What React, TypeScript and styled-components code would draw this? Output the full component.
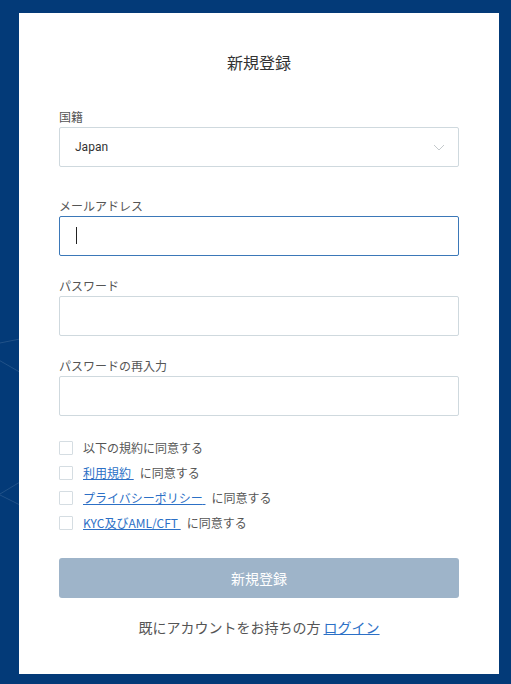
import React from 'react';
import styled, { createGlobalStyle } from 'styled-components';

const GlobalStyle = createGlobalStyle`
    html, body {
        margin: 0;
        padding: 0;
        background: #033a78;
    }

    body {
        font-family: "Noto Sans CJK JP", "Noto Sans", sans-serif;
    }
`;

const Page = styled.div`
    position: relative;
    min-height: 684px;
    padding: 13px 12px 10px 19px;
    box-sizing: border-box;
    overflow: hidden;
`;

const Backdrop = styled.svg`
    position: absolute;
    inset: 0;
    width: 100%;
    height: 100%;
    pointer-events: none;
`;

const Card = styled.main`
    position: relative;
    background: #fff;
    min-height: 661px;
    padding: 37px 40px 30px;
    box-sizing: border-box;
`;

const Title = styled.h1`
    margin: 0 0 34px;
    font-size: 16px;
    line-height: 24px;
    font-weight: 400;
    color: #333;
    text-align: center;
`;

const Field = styled.div<{ $spacing?: number }>`
    display: flex;
    flex-direction: column;
    margin-bottom: ${(p) => p.$spacing ?? 21}px;
`;

const Label = styled.label`
    font-size: 12px;
    line-height: 18px;
    color: #555;
    margin-bottom: 1px;
`;

const InputBox = styled.div<{ $focused?: boolean }>`
    position: relative;
    height: 40px;
    box-sizing: border-box;
    border: 1px solid ${(p) => (p.$focused ? '#3b78b8' : '#cfd9de')};
    border-radius: 2px;
    background: #fff;
    display: flex;
    align-items: center;
`;

const TextInput = styled.input`
    flex: 1;
    height: 100%;
    border: none;
    outline: none;
    background: transparent;
    padding: 0 16px;
    font-size: 12px;
    color: #333;
    caret-color: transparent;
    font-family: "Roboto", "Noto Sans CJK JP", sans-serif;
`;

const Caret = styled.span`
    position: absolute;
    left: 16px;
    top: 10px;
    width: 1px;
    height: 17px;
    background: #222;
`;

const SelectValue = styled.span`
    flex: 1;
    padding: 0 15px;
    font-family: "Roboto", "Liberation Sans", sans-serif;
    font-size: 12px;
    color: #333;
`;

const Chevron = styled.svg`
    margin-right: 13px;
`;

const Checks = styled.ul`
    list-style: none;
    margin: 0 0 23px;
    padding: 0;
`;

const CheckRow = styled.li`
    display: flex;
    align-items: center;
    height: 25px;
    font-size: 12px;
    color: #555;
`;

const Box = styled.span`
    width: 14px;
    height: 14px;
    box-sizing: border-box;
    border: 1px solid #d5dde2;
    border-radius: 1px;
    margin-right: 10px;
`;

const Link = styled.a`
    color: #2c70c6;
    text-decoration: underline;
    cursor: pointer;
`;

const Suffix = styled.span`
    margin-left: 6px;
`;

const SubmitButton = styled.button`
    width: 100%;
    height: 40px;
    border: none;
    border-radius: 3px;
    background: #9eb4c9;
    color: #fff;
    font-family: inherit;
    font-size: 14px;
    cursor: default;
`;

const Footer = styled.p`
    margin: 19px 0 0;
    text-align: center;
    font-size: 14px;
    line-height: 20px;
    color: #555;
`;

const agreements: { link?: string; text: string }[] = [
    { text: '以下の規約に同意する' },
    { link: '利用規約', text: 'に同意する' },
    { link: 'プライバシーポリシー', text: 'に同意する' },
    { link: 'KYC及びAML/CFT', text: 'に同意する' },
];

export default function App() {
    return (
        <Page>
            <GlobalStyle />
            <Backdrop viewBox="0 0 511 684" preserveAspectRatio="none">
                <g stroke="#ffffff" strokeOpacity="0.12" strokeWidth="1" fill="none">
                    <line x1="-10" y1="345" x2="40" y2="335" />
                    <line x1="-10" y1="355" x2="30" y2="378" />
                    <line x1="-10" y1="500" x2="40" y2="470" />
                    <line x1="-10" y1="490" x2="40" y2="515" />
                </g>
            </Backdrop>
            <Card>
                <Title>新規登録</Title>

                <Field $spacing={30}>
                    <Label>国籍</Label>
                    <InputBox>
                        <SelectValue>Japan</SelectValue>
                        <Chevron width="12" height="7" viewBox="0 0 12 7">
                            <path d="M1 1l5 5 5-5" stroke="#c4c9cc" strokeWidth="1" fill="none" />
                        </Chevron>
                    </InputBox>
                </Field>

                <Field>
                    <Label>メールアドレス</Label>
                    <InputBox $focused>
                        <TextInput type="email" />
                        <Caret />
                    </InputBox>
                </Field>

                <Field>
                    <Label>パスワード</Label>
                    <InputBox>
                        <TextInput type="password" />
                    </InputBox>
                </Field>

                <Field $spacing={19}>
                    <Label>パスワードの再入力</Label>
                    <InputBox>
                        <TextInput type="password" />
                    </InputBox>
                </Field>

                <Checks>
                    {agreements.map((item) => (
                        <CheckRow key={item.text + (item.link ?? '')}>
                            <Box />
                            {item.link && <Link>{item.link}&nbsp;</Link>}
                            {item.link ? <Suffix>{item.text}</Suffix> : item.text}
                        </CheckRow>
                    ))}
                </Checks>

                <SubmitButton type="button">新規登録</SubmitButton>

                <Footer>
                    既にアカウントをお持ちの方 <Link>ログイン</Link>
                </Footer>
            </Card>
        </Page>
    );
}
